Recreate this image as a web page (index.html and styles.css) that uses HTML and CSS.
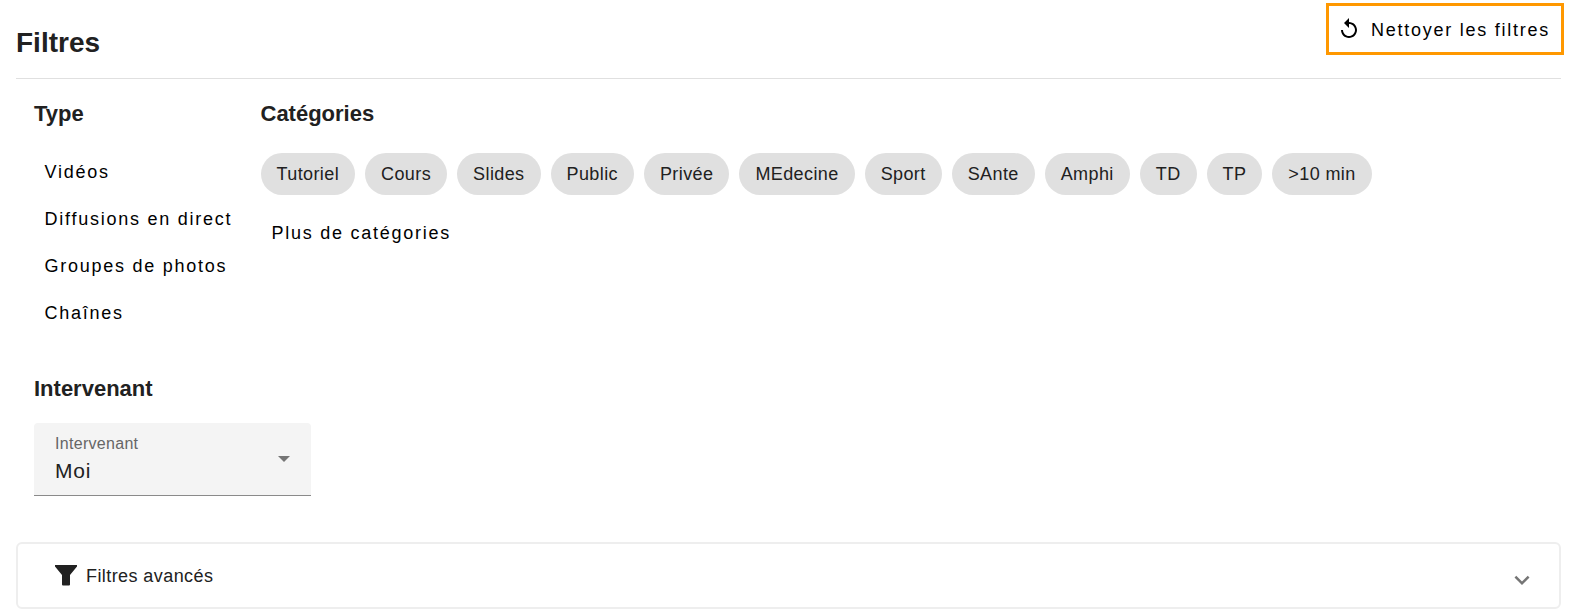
FILE: index.html
```html
<!DOCTYPE html>
<html lang="fr">
<head>
<meta charset="utf-8">
<title>Filtres</title>
<link rel="stylesheet" href="styles.css">
</head>
<body>
<header class="top">
  <h1 class="title">Filtres</h1>
  <button class="reset">
    <svg class="reset-icon" viewBox="0 0 24 24"><path d="M12 5V1L7 6l5 5V7c3.31 0 6 2.69 6 6s-2.69 6-6 6-6-2.69-6-6H4c0 4.42 3.58 8 8 8s8-3.58 8-8-3.58-8-8-8z"/></svg>
    <span class="reset-label">Nettoyer les filtres</span>
  </button>
</header>
<main class="filters">
  <div class="row">
    <section class="type">
      <h2 class="heading">Type</h2>
      <ul class="type-list">
        <li>Vidéos</li>
        <li>Diffusions en direct</li>
        <li>Groupes de photos</li>
        <li>Chaînes</li>
      </ul>
    </section>
    <section class="cats">
      <h2 class="heading">Catégories</h2>
      <div class="chips">
        <span class="chip">Tutoriel</span>
        <span class="chip">Cours</span>
        <span class="chip">Slides</span>
        <span class="chip">Public</span>
        <span class="chip">Privée</span>
        <span class="chip">MEdecine</span>
        <span class="chip">Sport</span>
        <span class="chip">SAnte</span>
        <span class="chip">Amphi</span>
        <span class="chip">TD</span>
        <span class="chip">TP</span>
        <span class="chip">&gt;10 min</span>
      </div>
      <div class="more">Plus de catégories</div>
    </section>
  </div>
  <section class="speaker">
    <h2 class="heading">Intervenant</h2>
    <div class="select">
      <div class="select-text">
        <div class="select-label">Intervenant</div>
        <div class="select-value">Moi</div>
      </div>
      <svg class="select-arrow" viewBox="0 0 12 6"><path d="M0 0h12L6 6z"/></svg>
    </div>
  </section>
</main>
<section class="advanced">
  <div class="advanced-left">
    <svg class="funnel" viewBox="0 0 24 24"><path d="M1 2h22v1.500L16 12v9.500a1 1 0 0 1-1 1H9a1 1 0 0 1-1-1V12L1 3.500z"/></svg>
    <span class="advanced-label">Filtres avancés</span>
  </div>
  <svg class="chevron" viewBox="0 0 24 24"><path d="M16.590 8.590 12 13.170 7.410 8.590 6 10l6 6 6-6z"/></svg>
</section>
</body>
</html>
```
FILE: styles.css
```css
* { box-sizing: border-box; }
html, body { margin: 0; padding: 0; background: #fff; }
body {
  width: 1577px;
  height: 613px;
  overflow: hidden;
  padding: 3px 16px 0;
  font-family: "Liberation Sans", Arial, sans-serif;
  color: #212121;
}
.top {
  height: 76px;
  display: flex;
  justify-content: space-between;
  align-items: flex-start;
  border-bottom: 1px solid #e0e0e0;
}
.title {
  margin: 23px 0 0;
  font-size: 28px;
  line-height: 34px;
  font-weight: 700;
}
.reset {
  width: 238px;
  height: 52px;
  margin-right: -3px;
  display: flex;
  align-items: center;
  gap: 10px;
  padding: 0 0 0 8px;
  background: #fff;
  border: 3px solid #ff9800;
  font: inherit;
  font-size: 18px;
  letter-spacing: 1.75px;
  color: #000;
}
.reset-label { padding-top: 2px; }
.reset-icon { width: 24px; height: 24px; fill: #000; flex: none; }
.filters { padding: 0 18px; }
.row { display: flex; }
.heading {
  margin: 0;
  font-size: 22px;
  line-height: 28px;
  font-weight: 700;
}
.type { width: 226.500px; padding-top: 21px; }
.type-list {
  list-style: none;
  margin: 21px 0 0;
  padding: 0 0 0 10.500px;
  font-size: 18px;
  letter-spacing: 1.75px;
  color: #000;
}
.type-list li { height: 47px; line-height: 47px; }
.cats { flex: 1; padding-top: 21px; }
.chips { display: flex; gap: 10px; margin-top: 25px; }
.chip {
  height: 42px;
  line-height: 42px;
  padding: 0 16px;
  border-radius: 21px;
  background: #e0e0e0;
  font-size: 18px;
  letter-spacing: .4px;
}
.more {
  margin: 16px 0 0 11px;
  font-size: 18px;
  letter-spacing: 1.75px;
  color: #000;
  line-height: 44px;
}
.speaker { margin-top: 38px; }
.select {
  width: 277px;
  height: 73px;
  margin-top: 20px;
  padding: 0 21px;
  display: flex;
  align-items: center;
  justify-content: space-between;
  background: #f4f4f4;
  border-bottom: 1px solid #8a8a8a;
  border-radius: 4px 4px 0 0;
}
.select-text { padding-top: 2px; }
.select-label { font-size: 16px; line-height: 20px; letter-spacing: .3px; color: #666; }
.select-value { font-size: 21px; line-height: 33px; letter-spacing: .8px; }
.select-arrow { width: 12px; height: 6px; fill: #757575; }
.advanced {
  margin-top: 46px;
  height: 67px;
  display: flex;
  align-items: center;
  justify-content: space-between;
  padding: 0 22px 0 36px;
  border: 2px solid #eee;
  border-radius: 6px;
}
.advanced-left { display: flex; align-items: center; gap: 8px; font-size: 18px; letter-spacing: .42px; }
.advanced-label { padding-top: 2px; }
.funnel { width: 24px; height: 24px; fill: #212121; margin-top: -1px; }
.chevron { width: 30px; height: 30px; fill: #757575; margin-top: 8px; }
```
